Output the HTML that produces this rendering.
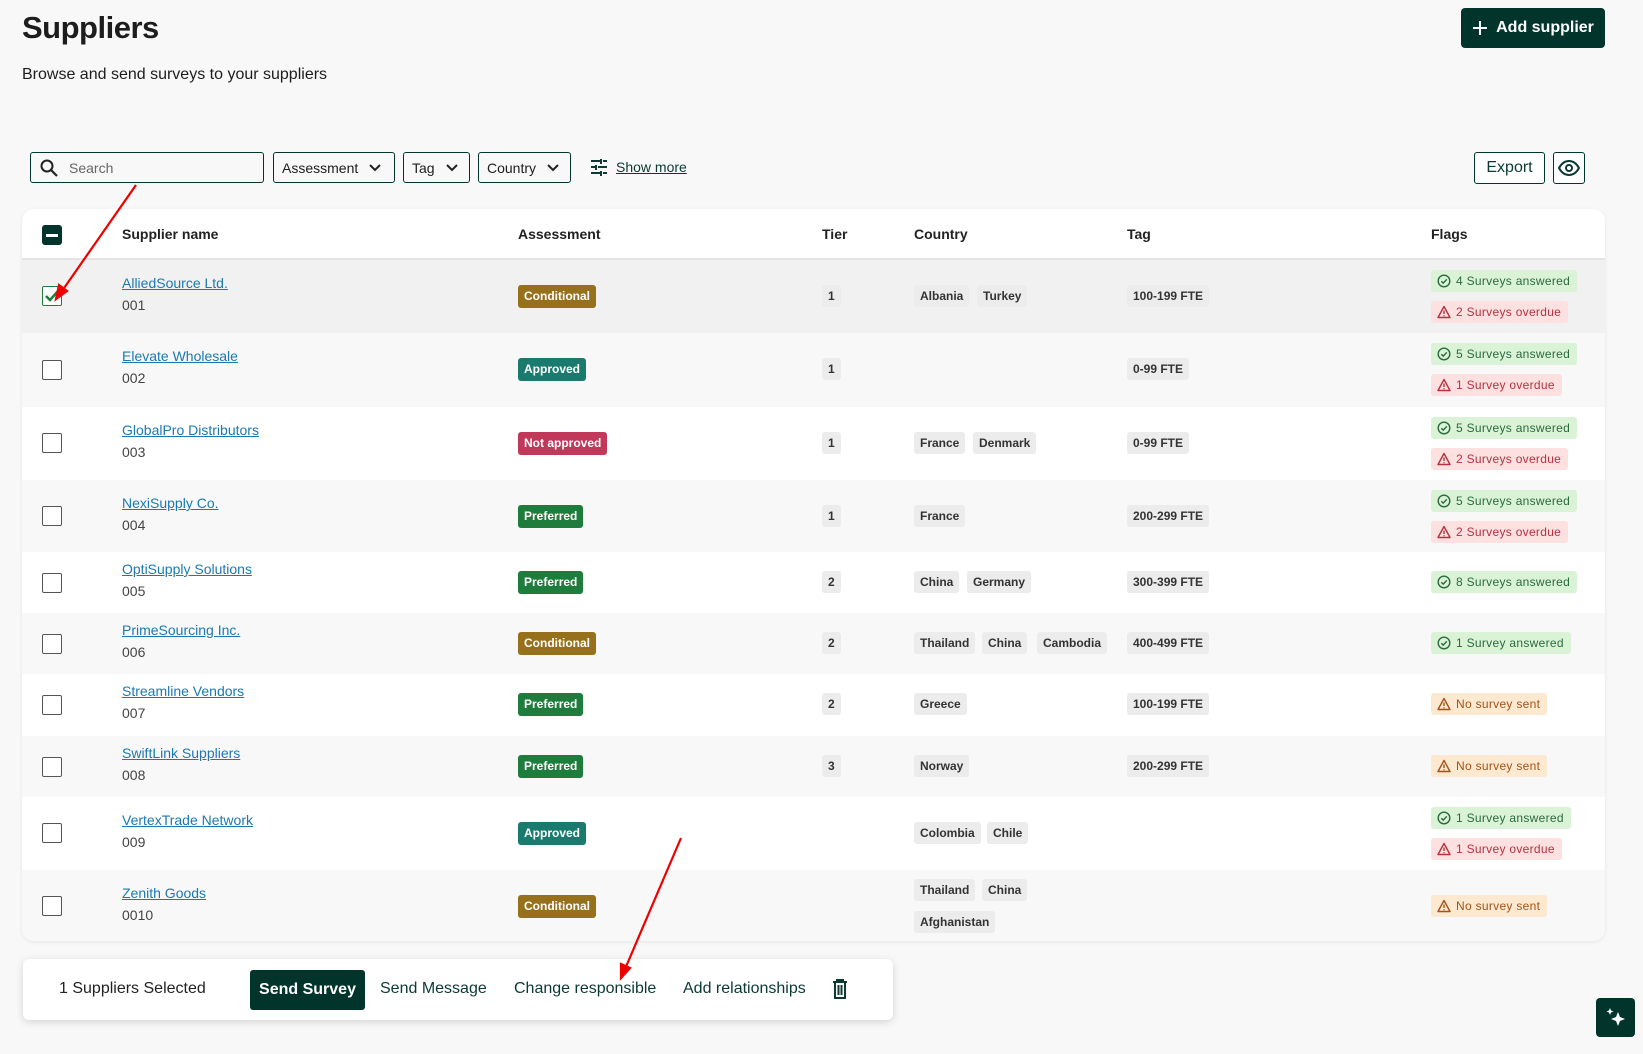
<!DOCTYPE html>
<html><head><meta charset="utf-8"><style>
*{box-sizing:border-box;margin:0;padding:0}
body{width:1643px;height:1054px;background:#f8f8f8;font-family:"Liberation Sans",sans-serif;color:#1d1d1d;position:relative;overflow:hidden}
.abs{position:absolute}
h1{position:absolute;left:22px;top:10px;font-size:31px;font-weight:bold;letter-spacing:-0.5px}
.sub{left:22px;top:66px;font-size:16px}
.btn-add{left:1461px;top:8px;width:144px;height:40px;background:#01352c;color:#fff;border-radius:4px;font-weight:bold;font-size:16px;display:flex;align-items:center;justify-content:center;gap:8px}
.field{top:152px;height:31px;border:1px solid #01352c;border-radius:3px;font-size:14px;display:flex;align-items:center;padding:0 8px;color:#1d1d1d;background:#f8f8f8}
.card{left:22px;top:209px;width:1583px;height:732px;background:#fff;border-radius:12px;box-shadow:0 1px 4px rgba(0,0,0,.08);overflow:hidden}
.hdr{position:absolute;left:0;top:0;width:100%;height:51px;border-bottom:2px solid #e4e4e4;font-size:14px;font-weight:bold;color:#222}
.hdr span{position:absolute;top:17px}
.row{position:absolute;left:0;width:100%}
.row>*{position:absolute}
.cb{left:20px;width:20px;height:20px;border:1.5px solid #555;border-radius:2px;background:#fff}
.name{left:100px;font-size:14px;color:#1a7ab0;text-decoration:underline}
.code{left:100px;font-size:14px;color:#444}
.badge{left:496px;height:23px;padding:0 6px;border-radius:3px;color:#fff;font-weight:bold;font-size:12px;line-height:23px}
.cond{background:#97701b}.appr{background:#1b7a6e}.notap{background:#c0395a}.pref{background:#1e7d3c}
.chip{height:22px;padding:0 6px;border-radius:3px;background:#ececec;font-size:12px;line-height:22px;font-weight:bold;color:#333}
.flag{left:1409px;height:22px;padding:0 7px 0 6px;border-radius:3px;font-size:12px;line-height:22px;display:flex;align-items:center;gap:5px;letter-spacing:.3px}
.flag svg{flex:none}
.g{background:#daf3d6;color:#2b6a3c}.r{background:#fde0e0;color:#b3323f}.o{background:#fde9d0;color:#a0521a}
.bar{left:23px;top:959px;width:870px;height:61px;background:#fff;border-radius:6px;box-shadow:0 2px 8px rgba(0,0,0,.15);font-size:16px}
.bar span{position:absolute;top:21px;color:#0b3a32}
</style></head><body>
<svg width="0" height="0" style="position:absolute"><defs>
<symbol id="ok" viewBox="0 0 14 14"><circle cx="7" cy="7" r="5.8" stroke="currentColor" stroke-width="1.4" fill="none"/><path d="M4.3 7.2l1.9 1.9 3.6-3.7" stroke="currentColor" stroke-width="1.4" fill="none"/></symbol>
<symbol id="wr" viewBox="0 0 14 14"><path d="M7 1.5L13 12.5H1z" stroke="currentColor" stroke-width="1.4" fill="none" stroke-linejoin="round"/><path d="M7 5.5v3.5M7 10.2v1" stroke="currentColor" stroke-width="1.4"/></symbol>
</defs></svg>
<h1>Suppliers</h1>
<div class="abs sub">Browse and send surveys to your suppliers</div>
<div class="abs btn-add"><svg width="16" height="16" viewBox="0 0 16 16"><path d="M8 1v14M1 8h14" stroke="#fff" stroke-width="2"/></svg>Add supplier</div>

<div class="abs field" style="left:30px;width:234px;color:#666"><svg width="20" height="20" viewBox="0 0 20 20" style="margin-right:10px"><circle cx="8" cy="8" r="5.5" stroke="#222" stroke-width="2" fill="none"/><path d="M12 12l6 6" stroke="#222" stroke-width="2.2"/></svg>Search</div>
<div class="abs field" style="left:273px;width:122px">Assessment<svg width="14" height="10" viewBox="0 0 14 10" style="margin-left:10px"><path d="M2 2l5 5 5-5" stroke="#222" stroke-width="2" fill="none"/></svg></div>
<div class="abs field" style="left:403px;width:67px">Tag<svg width="14" height="10" viewBox="0 0 14 10" style="margin-left:10px"><path d="M2 2l5 5 5-5" stroke="#222" stroke-width="2" fill="none"/></svg></div>
<div class="abs field" style="left:478px;width:93px">Country<svg width="14" height="10" viewBox="0 0 14 10" style="margin-left:10px"><path d="M2 2l5 5 5-5" stroke="#222" stroke-width="2" fill="none"/></svg></div>
<div class="abs" style="left:590px;top:158px;display:flex;align-items:center;gap:8px;font-size:14px;color:#0b3a32"><svg width="18" height="18" viewBox="0 0 18 18"><path d="M1 3h9M13 3h4M1 9h4M8 9h9M1 15h9M13 15h4M11 1v5M6 7v5M11 13v5" stroke="#0b3a32" stroke-width="2"/></svg><span style="text-decoration:underline">Show more</span></div>
<div class="abs field" style="left:1474px;width:71px;height:32px;justify-content:center;font-size:16px;color:#0b3a32;background:#fff">Export</div>
<div class="abs field" style="left:1553px;width:32px;height:32px;justify-content:center;padding:0;background:#fff"><svg width="22" height="16" viewBox="0 0 22 16"><path d="M1 8C4 2.5 8 1 11 1s7 1.5 10 7c-3 5.5-7 7-10 7S4 13.5 1 8z" stroke="#0b3a32" stroke-width="2" fill="none"/><circle cx="11" cy="8" r="3" stroke="#0b3a32" stroke-width="2" fill="none"/></svg></div>

<div class="abs card">
<div class="hdr"><div style="position:absolute;left:20px;top:16px;width:20px;height:20px;background:#01352c;border-radius:3px"><div style="position:absolute;left:4px;top:9px;width:12px;height:2.5px;background:#fff"></div></div>
<span style="left:100px">Supplier name</span><span style="left:496px">Assessment</span><span style="left:800px">Tier</span><span style="left:892px">Country</span><span style="left:1105px">Tag</span><span style="left:1409px">Flags</span></div>

<div class="row" style="top:51px;height:73px;background:#f1f1f1">
<div class="cb" style="top:26px;border-color:#1e7d3c"><svg width="17" height="17" viewBox="0 0 17 17"><path d="M3 9l4 4 8-9" stroke="#1e7d3c" stroke-width="2.5" fill="none"/></svg></div>
<div class="name" style="top:15px">AlliedSource Ltd.</div><div class="code" style="top:37px">001</div>
<div class="badge cond" style="top:25px">Conditional</div>
<div class="chip" style="left:800px;top:25px">1</div>
<div class="chip" style="left:892px;top:25px">Albania</div><div class="chip" style="left:955px;top:25px">Turkey</div>
<div class="chip" style="left:1105px;top:25px">100-199 FTE</div>
<div class="flag g" style="top:10px"><svg width="14" height="14"><use href="#ok"/></svg>4 Surveys answered</div><div class="flag r" style="top:41px"><svg width="14" height="14"><use href="#wr"/></svg>2 Surveys overdue</div>
</div>

<div class="row" style="top:124px;height:74px;background:#f8f8f8">
<div class="cb" style="top:27px"></div>
<div class="name" style="top:15px">Elevate Wholesale</div><div class="code" style="top:37px">002</div>
<div class="badge appr" style="top:25px">Approved</div>
<div class="chip" style="left:800px;top:25px">1</div>
<div class="chip" style="left:1105px;top:25px">0-99 FTE</div>
<div class="flag g" style="top:10px"><svg width="14" height="14"><use href="#ok"/></svg>5 Surveys answered</div><div class="flag r" style="top:41px"><svg width="14" height="14"><use href="#wr"/></svg>1 Survey overdue</div>
</div>

<div class="row" style="top:198px;height:73px">
<div class="cb" style="top:26px"></div>
<div class="name" style="top:15px">GlobalPro Distributors</div><div class="code" style="top:37px">003</div>
<div class="badge notap" style="top:25px">Not approved</div>
<div class="chip" style="left:800px;top:25px">1</div>
<div class="chip" style="left:892px;top:25px">France</div><div class="chip" style="left:951px;top:25px">Denmark</div>
<div class="chip" style="left:1105px;top:25px">0-99 FTE</div>
<div class="flag g" style="top:10px"><svg width="14" height="14"><use href="#ok"/></svg>5 Surveys answered</div><div class="flag r" style="top:41px"><svg width="14" height="14"><use href="#wr"/></svg>2 Surveys overdue</div>
</div>

<div class="row" style="top:271px;height:72px;background:#f8f8f8">
<div class="cb" style="top:26px"></div>
<div class="name" style="top:15px">NexiSupply Co.</div><div class="code" style="top:37px">004</div>
<div class="badge pref" style="top:25px">Preferred</div>
<div class="chip" style="left:800px;top:25px">1</div>
<div class="chip" style="left:892px;top:25px">France</div>
<div class="chip" style="left:1105px;top:25px">200-299 FTE</div>
<div class="flag g" style="top:10px"><svg width="14" height="14"><use href="#ok"/></svg>5 Surveys answered</div><div class="flag r" style="top:41px"><svg width="14" height="14"><use href="#wr"/></svg>2 Surveys overdue</div>
</div>

<div class="row" style="top:343px;height:61px">
<div class="cb" style="top:21px"></div>
<div class="name" style="top:9px">OptiSupply Solutions</div><div class="code" style="top:31px">005</div>
<div class="badge pref" style="top:19px">Preferred</div>
<div class="chip" style="left:800px;top:19px">2</div>
<div class="chip" style="left:892px;top:19px">China</div><div class="chip" style="left:945px;top:19px">Germany</div>
<div class="chip" style="left:1105px;top:19px">300-399 FTE</div>
<div class="flag g" style="top:19px"><svg width="14" height="14"><use href="#ok"/></svg>8 Surveys answered</div>
</div>

<div class="row" style="top:404px;height:61px;background:#f8f8f8">
<div class="cb" style="top:21px"></div>
<div class="name" style="top:9px">PrimeSourcing Inc.</div><div class="code" style="top:31px">006</div>
<div class="badge cond" style="top:19px">Conditional</div>
<div class="chip" style="left:800px;top:19px">2</div>
<div class="chip" style="left:892px;top:19px">Thailand</div><div class="chip" style="left:960px;top:19px">China</div><div class="chip" style="left:1015px;top:19px">Cambodia</div>
<div class="chip" style="left:1105px;top:19px">400-499 FTE</div>
<div class="flag g" style="top:19px"><svg width="14" height="14"><use href="#ok"/></svg>1 Survey answered</div>
</div>

<div class="row" style="top:465px;height:62px">
<div class="cb" style="top:21px"></div>
<div class="name" style="top:9px">Streamline Vendors</div><div class="code" style="top:31px">007</div>
<div class="badge pref" style="top:19px">Preferred</div>
<div class="chip" style="left:800px;top:19px">2</div>
<div class="chip" style="left:892px;top:19px">Greece</div>
<div class="chip" style="left:1105px;top:19px">100-199 FTE</div>
<div class="flag o" style="top:19px"><svg width="14" height="14"><use href="#wr"/></svg>No survey sent</div>
</div>

<div class="row" style="top:527px;height:61px;background:#f8f8f8">
<div class="cb" style="top:21px"></div>
<div class="name" style="top:9px">SwiftLink Suppliers</div><div class="code" style="top:31px">008</div>
<div class="badge pref" style="top:19px">Preferred</div>
<div class="chip" style="left:800px;top:19px">3</div>
<div class="chip" style="left:892px;top:19px">Norway</div>
<div class="chip" style="left:1105px;top:19px">200-299 FTE</div>
<div class="flag o" style="top:19px"><svg width="14" height="14"><use href="#wr"/></svg>No survey sent</div>
</div>

<div class="row" style="top:588px;height:73px">
<div class="cb" style="top:26px"></div>
<div class="name" style="top:15px">VertexTrade Network</div><div class="code" style="top:37px">009</div>
<div class="badge appr" style="top:25px">Approved</div>
<div class="chip" style="left:892px;top:25px">Colombia</div><div class="chip" style="left:965px;top:25px">Chile</div>
<div class="flag g" style="top:10px"><svg width="14" height="14"><use href="#ok"/></svg>1 Survey answered</div><div class="flag r" style="top:41px"><svg width="14" height="14"><use href="#wr"/></svg>1 Survey overdue</div>
</div>

<div class="row" style="top:661px;height:71px;background:#f8f8f8">
<div class="cb" style="top:26px"></div>
<div class="name" style="top:15px">Zenith Goods</div><div class="code" style="top:37px">0010</div>
<div class="badge cond" style="top:25px">Conditional</div>
<div class="chip" style="left:892px;top:9px">Thailand</div><div class="chip" style="left:960px;top:9px">China</div>
<div class="chip" style="left:892px;top:41px">Afghanistan</div>
<div class="flag o" style="top:25px"><svg width="14" height="14"><use href="#wr"/></svg>No survey sent</div>
</div>
</div>

<div class="abs bar">
<span style="left:36px;color:#222">1 Suppliers Selected</span>
<div style="position:absolute;left:227px;top:11px;width:115px;height:40px;background:#01352c;border-radius:3px;color:#fff;font-weight:bold;display:flex;align-items:center;justify-content:center">Send Survey</div>
<span style="left:357px">Send Message</span>
<span style="left:491px">Change responsible</span>
<span style="left:660px">Add relationships</span>
<svg style="position:absolute;left:809px;top:20px" width="16" height="20" viewBox="0 0 16 20"><path d="M1 3h14M5 3V1h6v2M3 3v16h10V3M6.5 6v10M9.5 6v10" stroke="#0b3a32" stroke-width="2" fill="none"/></svg>
</div>

<div class="abs" style="left:1596px;top:998px;width:39px;height:39px;background:#01352c;border-radius:4px"><svg width="39" height="39" viewBox="0 0 39 39"><path d="M22 14l2 5 5 2-5 2-2 5-2-5-5-2 5-2z M14 10l1 2.5 2.5 1-2.5 1-1 2.5-1-2.5-2.5-1 2.5-1z" fill="#fff"/></svg></div>

<svg class="abs" style="left:0;top:0" width="1643" height="1054"><g stroke="#e00" stroke-width="2.2" fill="#e00">
<line x1="136" y1="185" x2="62" y2="291"/><path d="M56 299l3-14 8 6z"/>
<line x1="681" y1="838" x2="625" y2="969"/><path d="M621 978l0-14 9 4z"/></g></svg>
</body></html>
